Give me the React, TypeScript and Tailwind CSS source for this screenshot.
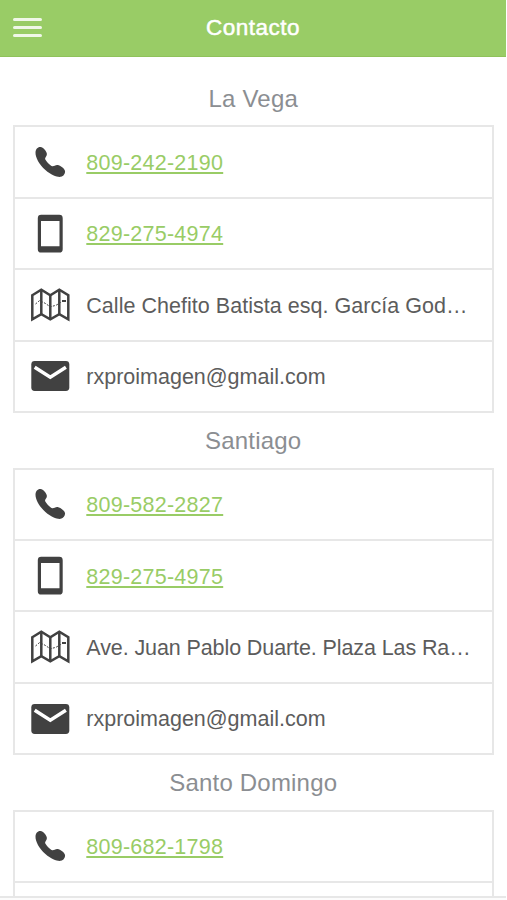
import React from 'react';

type ItemKind = 'phone' | 'mobile' | 'map' | 'mail';

interface ContactItem {
    kind: ItemKind;
    text: string;
    spacing: string;
}

interface Office {
    city: string;
    items: ContactItem[];
}

const offices: Office[] = [
    {
        city: 'La Vega',
        items: [
            { kind: 'phone', text: '809-242-2190', spacing: 'tracking-[0.25px]' },
            { kind: 'mobile', text: '829-275-4974', spacing: 'tracking-[0.25px]' },
            { kind: 'map', text: 'Calle Chefito Batista esq. García God…', spacing: 'tracking-[0.03px]' },
            { kind: 'mail', text: 'rxproimagen@gmail.com', spacing: 'tracking-[0px]' },
        ],
    },
    {
        city: 'Santiago',
        items: [
            { kind: 'phone', text: '809-582-2827', spacing: 'tracking-[0.25px]' },
            { kind: 'mobile', text: '829-275-4975', spacing: 'tracking-[0.25px]' },
            { kind: 'map', text: 'Ave. Juan Pablo Duarte. Plaza Las Ra…', spacing: 'tracking-[-0.1px]' },
            { kind: 'mail', text: 'rxproimagen@gmail.com', spacing: 'tracking-[0px]' },
        ],
    },
    {
        city: 'Santo Domingo',
        items: [
            { kind: 'phone', text: '809-682-1798', spacing: 'tracking-[0.25px]' },
            { kind: 'mobile', text: '', spacing: 'tracking-[0.25px]' },
        ],
    },
];

const ItemIcon: React.FC<{ kind: ItemKind }> = ({ kind }) => (
    <svg viewBox="0 0 40 40" className="w-10 h-10 flex-shrink-0 text-[#414141]" fill="currentColor">
        {kind === 'phone' && (
            <path d="M10.6 5C8 4.6 5.6 7 5.5 10.4C5.3 15.3 9.4 22.7 15.4 28C21.4 33.3 27.5 35.4 30.8 34.8C33.6 34.2 35.4 31.2 35 28.9C34.5 26.6 30.4 23.7 27.7 23.1C25.4 22.8 23.9 24.6 22.4 24.3C20.4 23.7 15.6 18.8 15.1 16.9C14.8 15.4 17 14.2 16.9 11.9C16.6 9.1 13.1 5.4 10.6 5Z" />
        )}
        {kind === 'mobile' && (
            <path
                fillRule="evenodd"
                d="M11.2 .8H29.3Q32.7 .8 32.7 4.2V35.2Q32.7 38.6 29.3 38.6H11.2Q7.8 38.6 7.8 35.2V4.2Q7.8 .8 11.2 .8ZM11 7.1V32.2H29.5V7.1Z"
            />
        )}
        {kind === 'map' && (
            <g fill="none" stroke="currentColor" strokeWidth="2.5">
                <path d="M2.3 10.2L11.3 4.8L20.3 10.2L29.3 4.8L38.3 10.2V34.3L29.3 29.2L20.3 34.3L11.3 29.2L2.3 34.3Z" />
                <path d="M11.3 5.1V29.2M20.3 10.2V34.1M29.3 5.1V29.2" />
                <path d="M5.5 19L9.5 15.6L15 18.2L20.3 21.8L26 20.3L33.5 15.8" strokeWidth="1" strokeDasharray="2 1.4" />
                <path d="M32 16H36" strokeWidth="2" />
            </g>
        )}
        {kind === 'mail' && (
            <>
                <rect x="1.3" y="5" width="38" height="30" rx="3.4" />
                <path d="M4.7 11.2L20.3 21.2L35.9 11.2" fill="none" stroke="#fff" strokeWidth="3.5" />
            </>
        )}
    </svg>
);

const ContactRow: React.FC<{ item: ContactItem }> = ({ item }) => {
    const isLink = item.kind === 'phone' || item.kind === 'mobile';

    return (
        <li className="flex h-[71.4px] items-center gap-[16.5px] border-t-2 border-[#e7e7e7] pl-[15.3px]">
            <ItemIcon kind={item.kind} />
            {isLink ? (
                <a
                    href={`tel:${item.text}`}
                    className={`whitespace-nowrap pt-[2px] text-[#99cc66] underline decoration-[1.5px] underline-offset-[1.5px] ${item.spacing}`}
                >
                    {item.text}
                </a>
            ) : (
                <span className={`whitespace-nowrap pt-[2px] text-[#5c5c5c] ${item.spacing}`}>{item.text}</span>
            )}
        </li>
    );
};

export default function App() {
    return (
        <div className="flex h-[900px] w-[507px] flex-col overflow-hidden bg-white font-['Liberation_Sans',Arial,sans-serif] text-[21.5px]">
            {/* Header */}
            <header className="grid h-[57px] w-[506px] flex-shrink-0 grid-cols-[1fr_auto_1fr] items-center border-b border-[#8fc25b] bg-[#99cc66] pl-[13px] pr-[13px]">
                <button className="flex w-[29px] flex-col gap-[5px] pb-px" aria-label="Menu">
                    <span className="h-[3px] w-full rounded-full bg-white/85" />
                    <span className="h-[3px] w-full rounded-full bg-white/85" />
                    <span className="h-[3px] w-full rounded-full bg-white/85" />
                </button>
                <h1 className="text-[22.5px] leading-none tracking-[0.5px] text-white [-webkit-text-stroke:0.5px_white]">
                    Contacto
                </h1>
            </header>

            {/* Offices */}
            <main className="min-h-0 w-[506px] flex-1 overflow-hidden pl-[12.5px] pr-[12px] pt-[13.9px]">
                {offices.map((office) => (
                    <section key={office.city}>
                        <h2 className="flex h-[54.6px] items-center justify-center pt-px text-2xl tracking-[0.2px] text-[#8b8e92]">
                            {office.city}
                        </h2>
                        <ul className="border-x-2 border-b-2 border-[#e7e7e7]">
                            {office.items.map((item) => (
                                <ContactRow key={item.kind} item={item} />
                            ))}
                        </ul>
                    </section>
                ))}
            </main>

            {/* Bottom bar */}
            <footer className="h-1 w-[506px] flex-shrink-0 border-t-2 border-[#e7e7e7] bg-[#fcfcfc]" />
        </div>
    );
}
